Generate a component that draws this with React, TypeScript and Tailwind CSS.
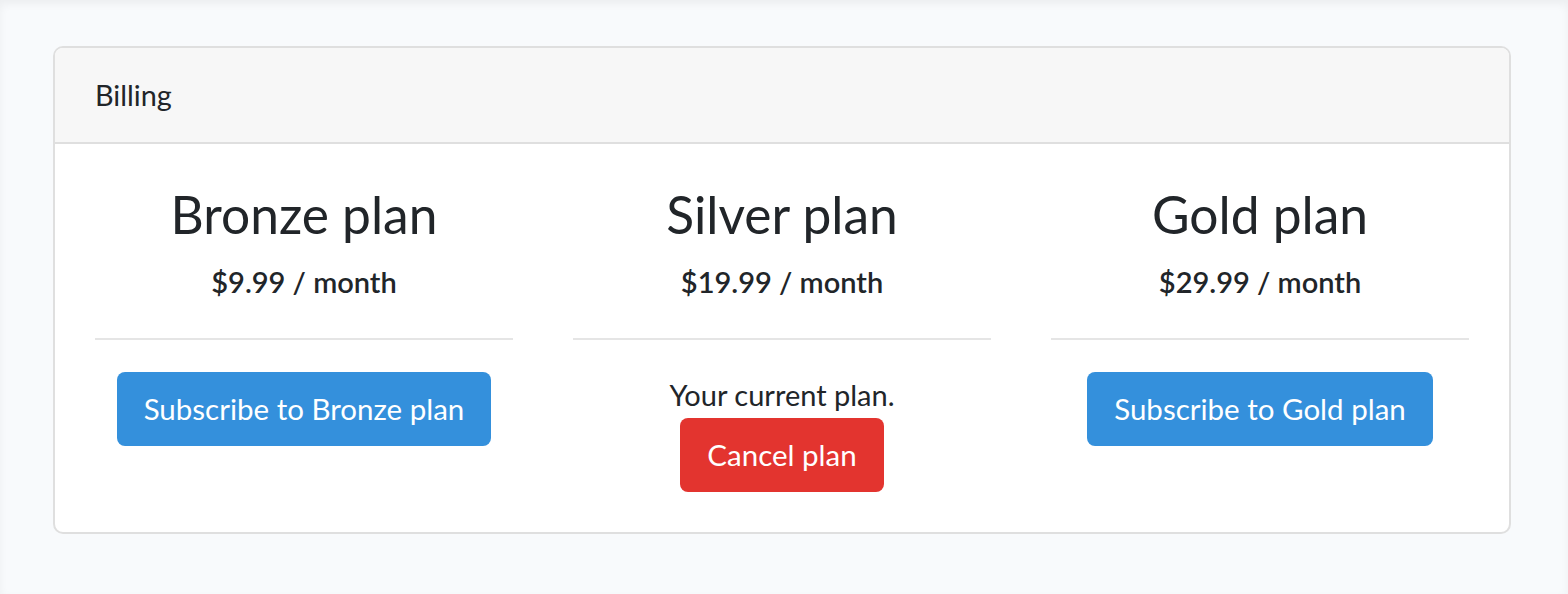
const plans = [
  { name: 'Bronze plan', price: '$9.99 / month', current: false },
  { name: 'Silver plan', price: '$19.99 / month', current: true },
  { name: 'Gold plan', price: '$29.99 / month', current: false },
]

export default function App() {
  return (
    <div
      className="min-h-screen bg-[#f8fafc] pt-[46px] text-[#212529] shadow-[inset_0_4px_8px_rgba(0,0,0,0.05)]"
      style={{ fontFamily: 'Lato, "Open Sans", sans-serif' }}
    >
      <div className="ml-[53px] w-[1458px] overflow-hidden rounded-[10px] border-2 border-[#dfdfdf] bg-white">
        <div className="border-b-2 border-[#dfdfdf] bg-[#f7f7f7] px-[40px] py-[24px] text-[28.8px] leading-[46px]">
          Billing
        </div>

        <div className="grid grid-cols-3 gap-[60px] p-[40px]">
          {plans.map((p) => (
            <div key={p.name} className="flex flex-col items-center text-center">
              <h3 className="mb-[16px] text-[51.5px] font-normal leading-[60px]">{p.name}</h3>
              <h5 className="text-[29px] font-semibold leading-[43px]">{p.price}</h5>
              <div className="mb-[32px] mt-[35px] h-[2px] w-full bg-[#e5e5e5]" />

              {p.current ? (
                <>
                  <div className="text-[29px] leading-[46px]">Your current plan.</div>
                  <button className="rounded-[8px] bg-[#e3342f] px-[27px] py-[14px] text-[29.5px] leading-[46px] text-white">
                    Cancel plan
                  </button>
                </>
              ) : (
                <button className="rounded-[8px] bg-[#3490dc] px-[27px] py-[14px] text-[29.5px] leading-[46px] text-white">
                  Subscribe to {p.name}
                </button>
              )}
            </div>
          ))}
        </div>
      </div>
    </div>
  )
}
